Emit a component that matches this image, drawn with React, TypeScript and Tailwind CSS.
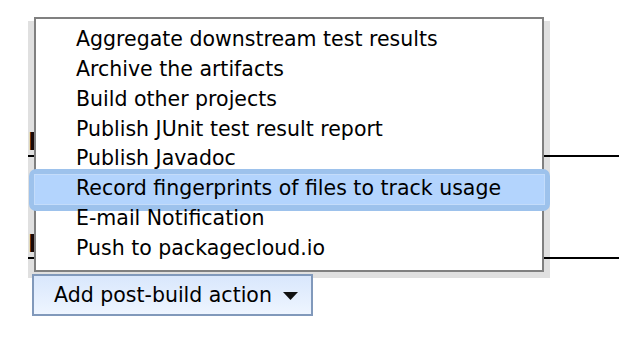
const items = [
  "Aggregate downstream test results",
  "Archive the artifacts",
  "Build other projects",
  "Publish JUnit test result report",
  "Publish Javadoc",
  "Record fingerprints of files to track usage",
  "E-mail Notification",
  "Push to packagecloud.io",
];

const SELECTED = 5;

// section heading mostly hidden behind the popup, only its first stroke shows
function SectionHeader() {
  return (
    <div className="flex h-[32px] items-end border-b-2 border-black pb-[1px]">
      <span className="text-[24px] font-bold leading-none text-[#1c0b0b]">P</span>
    </div>
  );
}

export default function App() {
  return (
    <div
      className="relative h-[338px] w-[619px] overflow-hidden bg-white text-black"
      style={{ fontFamily: '"DejaVu Sans", Verdana, sans-serif' }}
    >
      <div className="flex flex-col items-stretch pl-[28px] pt-[125px]">
        <SectionHeader />
        <div className="h-[70px]" />
        <SectionHeader />
        <div className="pl-[4px] pt-[15px]">
          <button
            type="button"
            className="relative z-20 flex h-[42px] w-[281px] items-center gap-[11px] border-2 border-[#8199bb] bg-gradient-to-b from-[#d9e7fc] to-[#eef5ff] pl-[20px] text-[20.5px] leading-none"
          >
            <span>Add post-build action</span>
            <svg width="15" height="8" viewBox="0 0 15 8" className="mt-[1px]">
              <path d="M0 0h15L7.5 8z" fill="#111" />
            </svg>
          </button>
        </div>
      </div>

      {/* drop shadow of the popup */}
      <div className="absolute left-[28px] top-[21px] z-10 h-[257px] w-[522px] bg-black/[0.12]" />

      <ul className="absolute left-[34px] top-[17px] z-30 h-[255px] w-[510px] border-2 border-[#808080] bg-white pt-[6px] text-[20.5px] leading-[29.85px]">
        {items.map((label, i) => (
          <li key={label} className="relative whitespace-nowrap pl-[40px]">
            {i === SELECTED && (
              <div className="absolute -bottom-[7px] -left-[7px] -right-[8px] -top-[5px] rounded-[7px] bg-[#9dc2ec] p-[5px] pb-[6px]">
                <div className="h-full w-full border border-[#c4dcfa] bg-[#b3d4fd]" />
              </div>
            )}
            <span className="relative">{label}</span>
          </li>
        ))}
      </ul>
    </div>
  );
}
